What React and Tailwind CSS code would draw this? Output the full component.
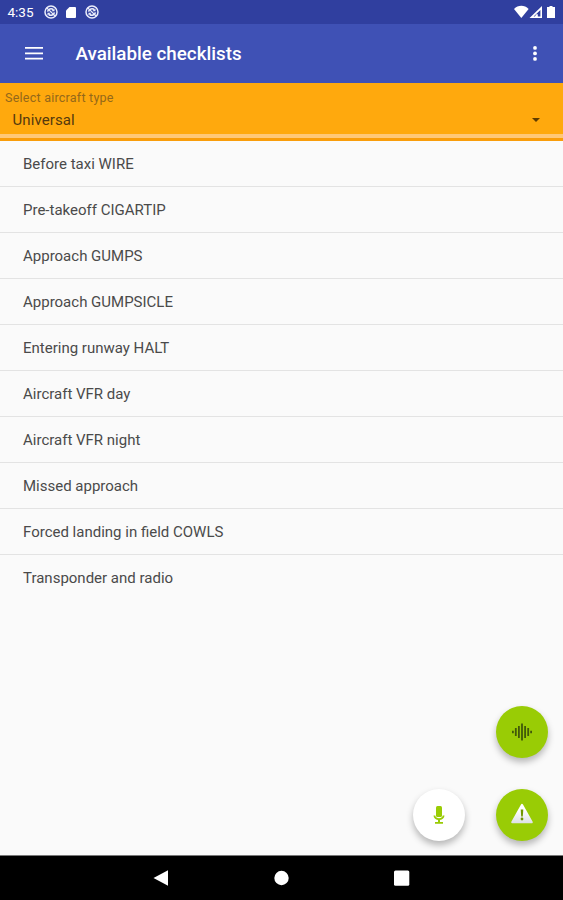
const CHECKLISTS = [
  'Before taxi WIRE',
  'Pre-takeoff CIGARTIP',
  'Approach GUMPS',
  'Approach GUMPSICLE',
  'Entering runway HALT',
  'Aircraft VFR day',
  'Aircraft VFR night',
  'Missed approach',
  'Forced landing in field COWLS',
  'Transponder and radio',
];

function SyncIcon() {
  return (
    <svg className="w-[14px] h-[14px]" viewBox="0 0 14 14" fill="none" stroke="#eceefb">
      <circle cx="7" cy="7" r="6" strokeWidth="1.5" />
      <path d="M3.6 6.6C4 3.8 7.4 2.9 9.3 4.7M10.4 7.4C10 10.2 6.6 11.1 4.7 9.3" strokeWidth="1.6" />
      <path d="M2.8 2.8l8.4 8.4" strokeWidth="1.2" />
      <path d="M7.3 6.2h3.2V3.5zM6.7 7.8H3.5v2.7z" fill="#eceefb" stroke="none" />
    </svg>
  );
}

function StatusBar() {
  return (
    <div className="flex h-6 items-center bg-[#303f9f] pl-[7.5px] pr-[7px] text-white">
      <span className="w-[36px] pt-px text-[13.5px] leading-none">4:35</span>
      <SyncIcon />
      <svg className="ml-[7px] w-[12px] h-[13px]" viewBox="0 0 12 13" fill="#fff">
        <path d="M4.5 1H10a1 1 0 0 1 1 1v9a1 1 0 0 1-1 1H2a1 1 0 0 1-1-1V4.5z" />
      </svg>
      <div className="ml-[8px]"><SyncIcon /></div>
      <div className="flex-1" />
      <svg className="w-[42px] h-[14px]" viewBox="0 0 42 14" fill="#fff">
        <path d="M0 4C4-.2 10.6-.2 14.6 4L7.3 13z" />
        <path d="M28 1v12H15.500zM26.4 5 19.6 11.5h6.800z" fillRule="evenodd" />
        <path d="M22.3 9.2h1.500v3.300h-3.500z" />
        <path d="M35.5 1h3v1H41v11h-8V2h2.500z" />
      </svg>
    </div>
  );
}

function AppBar() {
  return (
    <header className="flex h-[59px] items-center bg-[#3f51b5] pl-[25px] pr-[26px] text-white">
      <svg className="w-[18px] h-[14px]" viewBox="0 0 18 14" fill="#fff">
        <path d="M0 0h18v1.800H0zM0 5.400h18v1.800H0zM0 10.700h18v1.800H0z" />
      </svg>
      <h1 className="ml-[32.5px] flex-1 pt-[2px] text-[18.8px] font-medium leading-none">Available checklists</h1>
      <svg className="w-1 h-4" viewBox="0 0 4 16" fill="#fff">
        <circle cx="2" cy="1.9" r="1.9" />
        <circle cx="2" cy="7.4" r="1.9" />
        <circle cx="2" cy="12.9" r="1.9" />
      </svg>
    </header>
  );
}

function AircraftSelect() {
  return (
    <div className="h-[58px] border-b-[3px] border-[#f99d0a] bg-[#ffa90d]">
      <div className="h-[51px] pt-[7px]">
        <div className="pl-[5px] text-[12.5px] leading-[15px] tracking-[0.24px] text-[#94681a]">Select aircraft type</div>
        <div className="mt-[5px] flex items-center justify-between pl-[12.5px] pr-[23px]">
          <span className="text-[15px] leading-5 tracking-[0.1px] text-[#54390d]">Universal</span>
          <svg className="w-2 h-1" viewBox="0 0 8 4" fill="#5e3c00">
            <path d="M0 0h8L4 4z" />
          </svg>
        </div>
      </div>
      <div className="h-1 bg-[#ffc877]" />
    </div>
  );
}

function Fab({ className, children }) {
  return (
    <button
      className={`flex h-[52px] w-[52px] items-center justify-center rounded-full shadow-[0_4px_7px_rgba(0,0,0,0.28)] ${className}`}
    >
      {children}
    </button>
  );
}

function Actions() {
  return (
    <div className="absolute bottom-[59.5px] right-[15.5px] flex flex-col items-end gap-[30.5px]">
      <Fab className="bg-[#99cc05]">
        <svg className="w-5 h-[18px]" viewBox="0 0 20 18" stroke="#41590a" strokeWidth="1.8" fill="none">
          <path d="M.9 7.7v2.600M3.8 5v8M6.9 3v12M10 .5v17M13.1 3v12M16.2 5v8M19.1 7.7v2.600" />
        </svg>
      </Fab>
      <div className="flex gap-[30.5px]">
        <Fab className="bg-white">
          <svg className="w-3 h-[18px]" viewBox="0 0 12 18" fill="#99cc05">
            <rect x="3" y="0" width="6" height="11" rx="1.5" />
            <path d="M.5 9.5h1.800c.3 3.700 7.100 3.700 7.400 0h1.800c-.2 2.700-2 4-4.500 4.400V16h3v1.700H2V16h3v-2.100C2.5 13.500.7 12.200.5 9.500z" />
          </svg>
        </Fab>
        <Fab className="bg-[#99cc05]">
          <svg className="mb-[3px] w-6 h-[21px]" viewBox="0 0 24 21">
            <defs>
              <linearGradient id="warn" x1="0" y1="0" x2="0" y2="1">
                <stop offset="0.3" stopColor="#fff" />
                <stop offset="1" stopColor="#dfe2e6" />
              </linearGradient>
            </defs>
            <path d="M12 1.8 21.8 19.3H2.200z" fill="url(#warn)" stroke="url(#warn)" strokeWidth="2" strokeLinejoin="round" />
            <path d="M10.7 6.5h2.600l-.5 7h-1.600z" fill="#719600" />
            <circle cx="12" cy="16" r="1.4" fill="#719600" />
          </svg>
        </Fab>
      </div>
    </div>
  );
}

function NavBar() {
  return (
    <nav className="flex h-[45px] items-center justify-center border-t border-[#777] bg-black">
      <svg className="w-[257px] h-4" viewBox="0 0 257 16" fill="#fff">
        <path d="M.5 8 15 .3v15.400z" />
        <circle cx="128.5" cy="8" r="7.2" />
        <rect x="241" y=".5" width="15.3" height="15.3" rx="1.5" />
      </svg>
    </nav>
  );
}

export default function App() {
  return (
    <div className="flex h-screen w-full flex-col overflow-hidden bg-[#fafafa] font-['Roboto',sans-serif]">
      <StatusBar />
      <AppBar />
      <AircraftSelect />
      <main className="flex-1">
        <ul>
          {CHECKLISTS.map((name, i) => (
            <li
              key={name}
              className={`flex h-[46px] items-center pl-[23px] text-[15px] text-[#4a4a4a] ${i < CHECKLISTS.length - 1 ? 'border-b border-[#e3e3e3] pt-[2px]' : ''}`}
            >
              {name}
            </li>
          ))}
        </ul>
      </main>
      <Actions />
      <NavBar />
    </div>
  );
}
